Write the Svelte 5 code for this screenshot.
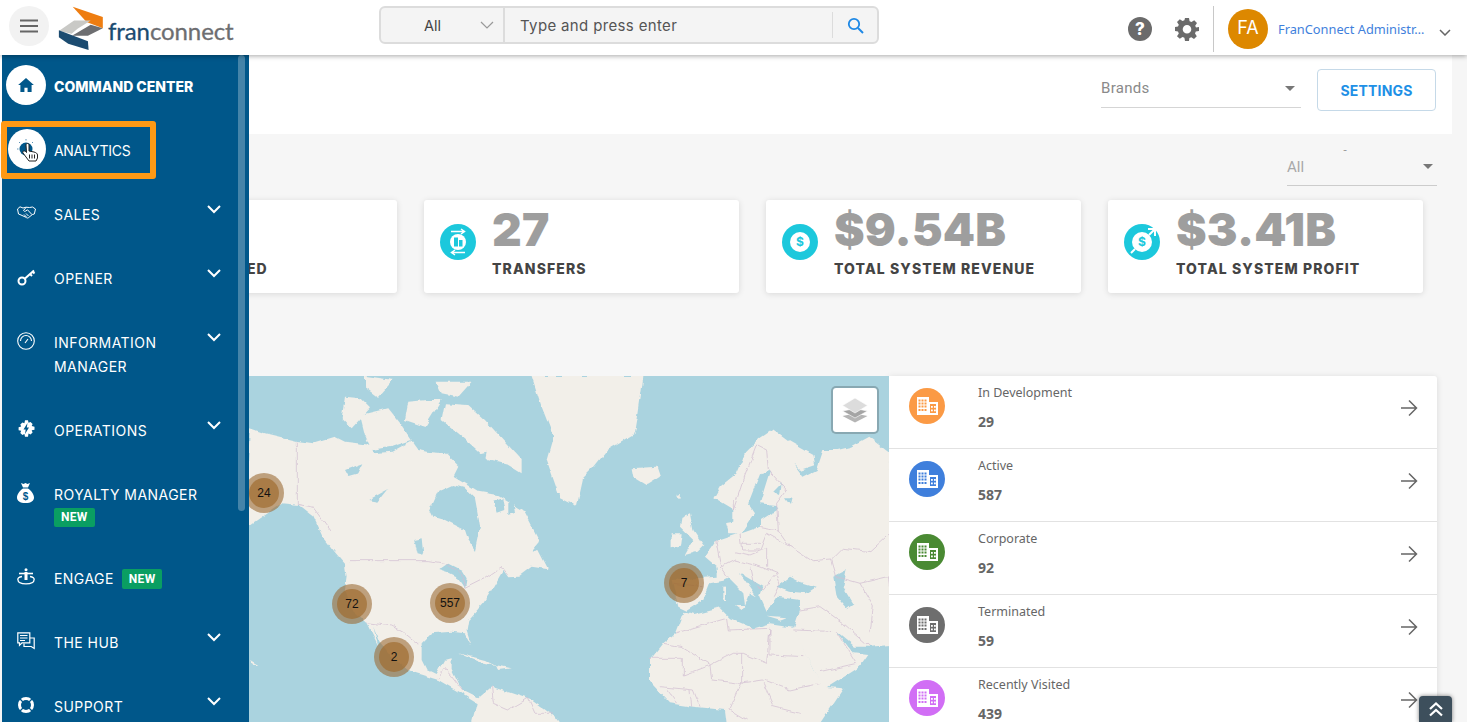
<script>
  const menu = [
    { label: 'SALES', icon: 'sales', more: true },
    { label: 'OPENER', icon: 'key', more: true },
    { label: 'INFORMATION MANAGER', icon: 'gauge', more: true, wrap: true },
    { label: 'OPERATIONS', icon: 'ops', more: true },
    { label: 'ROYALTY MANAGER', icon: 'money', badgeBelow: true },
    { label: 'ENGAGE', icon: 'engage', badge: true },
    { label: 'THE HUB', icon: 'hub', more: true },
    { label: 'SUPPORT', icon: 'support', more: true }
  ];

  const cards = [
    { value: '', label: 'UNITS OPENED', icon: 'none' },
    { value: '27', label: 'TRANSFERS', icon: 'transfer' },
    { value: '$9.54B', label: 'TOTAL SYSTEM REVENUE', icon: 'dollar' },
    { value: '$3.41B', label: 'TOTAL SYSTEM PROFIT', icon: 'profit' }
  ];

  const statuses = [
    { label: 'In Development', count: 29, color: '#fb9a45' },
    { label: 'Active', count: 587, color: '#3f7fdc' },
    { label: 'Corporate', count: 92, color: '#4a8a33' },
    { label: 'Terminated', count: 59, color: '#6e6e6e' },
    { label: 'Recently Visited', count: 439, color: '#d16ef5' }
  ];

  const clusters = [
    { n: 24, x: 264, y: 493 },
    { n: 72, x: 352, y: 604 },
    { n: 557, x: 450, y: 603 },
    { n: 2, x: 394, y: 657 },
    { n: 7, x: 684, y: 583 }
  ];

  // map outlines, traced in crop coordinates (3x) and scaled back by the groups below
  const landWest = [
    '0,455 15,175 60,190 157,213 205,220 270,200 300,215 380,225 385,250 440,245 500,212 520,240 545,245 600,250 640,290 625,320 650,335 700,365 760,375 835,420 885,515 860,545 880,540 910,598 860,590 820,620 790,622 775,600 740,660 715,700 670,750 665,780 680,828 660,790 620,785 560,790 530,820 530,870 545,900 575,915 600,870 620,865 620,900 650,960 700,985 740,950 860,990 930,1040 945,1060 680,1060 695,1000 640,965 580,930 500,905 440,860 400,810 385,770 400,830 365,760 320,720 300,660 305,620 300,585 270,550 235,505 205,440 160,405 110,400 50,440 15,465',
    '300,80 345,85 375,115 320,175 290,145',
    '345,135 430,115 470,165 500,210 440,230 380,240 360,195',
    '360,18 445,30 400,80 360,50',
    '575,35 680,35 640,80 590,70',
    '490,95 545,90 590,90 540,170 480,150',
    '600,100 670,105 720,150 830,270 830,310 790,285 730,270 640,190 590,150',
    '860,18 990,18 990,410 940,370 905,270 925,200 890,110',
    '640,850 720,870 750,885 700,875',
    '750,885 800,895 760,900',
    '15,870 40,885 25,885'
  ];
  const waterWest = [
    '555,420 580,365 625,345 660,355 690,385 700,440 705,470 690,540 670,510 660,480 600,450 565,440',
    '745,395 772,385 778,420 755,428',
    '300,300 355,280 340,310 310,318',
    '370,390 430,358 400,395',
    '505,510 530,505 535,555 515,550',
    '580,600 610,580 650,600 665,625 660,655 640,625 610,610',
    '705,250 725,245 720,270',
    '790,400 805,385 810,430 790,435'
  ];
  const bordersWest = [
    '157,215 157,403 205,412 255,480',
    '313,572 550,572 600,580 650,610 660,655 720,625 770,590 790,615',
    '365,758 440,768 480,790 520,822',
    '580,925 600,895 620,920 650,960',
    '740,950 745,1000 790,1020 850,985 870,1030 920,1030'
  ];
  const landEast = [
    '0,18 250,18 245,60 235,130 225,190 140,240 100,290 70,320 50,410 0,385',
    '215,295 290,290 300,320 260,345 220,320',
    '365,440 390,430 400,480 430,525 410,545 375,555 400,510 360,470',
    '335,490 365,490 360,530 335,535',
    '460,385 480,350 530,310 555,250 600,205 640,178 690,215 760,255 765,285 720,300 700,280 730,320 770,300 790,240 830,240 870,230 925,200 990,250 990,825 930,830 885,830 830,785 880,850 925,855 900,890 790,960 700,780 720,720 720,690 650,680 620,725 600,680 610,650 540,610 590,680 570,670 555,705 550,670 505,625 490,632 450,640 430,690 380,722 355,710 335,630 470,620 470,590 435,560 470,510 530,490 505,490 495,460 520,455 520,420',
    '270,870 310,820 345,790 370,725 400,735 480,715 510,745 580,775 630,760 700,770 760,900 790,950 850,955 800,1030 780,1060 500,1060 495,1020 400,1010 330,1000 270,935',
    '490,650 498,650 498,690 490,690',
    '525,705 555,705 545,720',
    '620,740 680,745 660,752',
    '345,375 360,372 358,385'
  ];
  const waterEast = [
    '565,400 600,310 630,302 612,360 600,400 650,405 655,415 600,450 600,470 545,490 585,430',
    '650,650 690,620 720,635 770,650 740,670 690,665',
    '820,620 860,600 850,650 880,700 860,715 830,680',
    '675,385 695,385 690,405',
    '640,365 665,340 660,375'
  ];
  const bordersEast = [
    '520,390 520,420 550,330 590,225 620,240 625,300 680,360 650,400 655,480',
    '540,490 545,540 600,540 620,490 690,530 760,575 815,570 850,535 930,545 990,490',
    '470,510 485,590 525,570 600,590 650,610 610,660',
    '525,545 570,555 620,535 620,590',
    '545,520 600,520',
    '570,590 580,640 610,660',
    '650,610 660,640 640,680',
    '600,470 655,480 690,530',
    '480,590 505,625',
    '340,640 430,650',
    '345,790 500,745 505,780 630,775 630,855 730,860',
    '310,820 365,830 450,885 520,850 550,850 620,880 630,775',
    '270,865 370,865 370,915 450,885 455,930 540,940 610,930 690,960 780,940',
    '300,950 400,960 420,1010',
    '545,850 545,940 510,1020 560,1050',
    '610,940 640,1010 720,1030',
    '780,905 890,880 830,785 700,780',
    '720,720 780,710 850,760 930,830',
    '815,570 830,620 900,640 985,620 990,660',
    '900,640 940,710 930,790',
    '320,960 350,1000',
    '390,960 395,1010'
  ];

  const dots = [3, 6, 9];
</script>

<div class="page">
  <header class="topbar">
    <button class="menu-btn" aria-label="menu">
      <svg width="18" height="14" viewBox="0 0 18 14"><path d="M0 1.5h18M0 7h18M0 12.5h18" stroke="#666" stroke-width="2" /></svg>
    </button>
    <div class="logo">
      <svg width="46" height="45" viewBox="176 16 132 130">
        <polygon points="218,18 305,48 305,80 258,62" fill="#ee7d11" />
        <polygon points="178,88 222,58 270,58 232,82 215,96" fill="#c9c9c6" />
        <polygon points="216,102 270,70 305,80 262,102" fill="#6d6e71" />
        <polygon points="178,86 262,118 264,143 205,125 178,106" fill="#1b4b70" />
      </svg>
      <span class="logo-text"><span class="fran">fran</span>connect</span>
    </div>

    <div class="search">
      <div class="scope">
        <span>All</span>
        <svg width="14" height="8" viewBox="0 0 14 8"><path d="M1 1l6 6 6-6" fill="none" stroke="#999" stroke-width="1.2" /></svg>
      </div>
      <div class="search-input">Type and press enter</div>
      <div class="search-btn">
        <svg width="17" height="17" viewBox="0 0 17 17"><circle cx="7" cy="7" r="5.2" fill="none" stroke="#1e88e5" stroke-width="1.8" /><path d="M11 11l5 5" stroke="#1e88e5" stroke-width="2" /></svg>
      </div>
    </div>

    <div class="top-right">
      <div class="help">?</div>
      <svg class="gear" width="24" height="24" viewBox="0 0 24 24">
        <path fill="#6b6b6b" fill-rule="evenodd" d="M10 1h4l.6 3.2 1.9.8 2.7-1.8 2.8 2.8-1.8 2.7.8 1.9L24 10v4l-3.2.6-.8 1.9 1.8 2.7-2.8 2.8-2.7-1.8-1.9.8L14 24h-4l-.6-3.2-1.9-.8-2.7 1.8L2 19.2l1.8-2.7-.8-1.9L0 14v-4l3-.4.8-1.9L2 5l2.8-2.8 2.7 1.8 1.9-.8zM12 8a4.300 4.300 0 1 0 0 8.600 4.300 4.300 0 0 0 0-8.600z" />
      </svg>
      <div class="vline"></div>
      <div class="avatar">FA</div>
      <div class="user-name">FranConnect Administr…</div>
      <svg width="12" height="7" viewBox="0 0 12 7"><path d="M1 1l5 5 5-5" fill="none" stroke="#666" stroke-width="1.5" /></svg>
    </div>
  </header>

  <main class="content">
    <section class="band">
      <div class="select brands"><span>Brands</span><i class="caret"></i></div>
      <button class="settings">SETTINGS</button>
    </section>

    <section class="filter">
      <span class="tick">-</span>
      <div class="select all"><span>All</span><i class="caret"></i></div>
    </section>

    <section class="cards">
      {#each cards as card}
        <div class="card">
          <div class="card-icon">
            {#if card.icon === 'transfer'}
              <svg width="30" height="30" viewBox="0 0 30 30">
                <circle cx="15" cy="15" r="8" fill="#fff" />
                <rect x="11" y="10.500" width="4" height="9" fill="#1cc8dc" /><rect x="16" y="13" width="3.500" height="6.500" fill="#1cc8dc" />
                <path d="M8 4.500h13M18 2l3.500 2.500L18 7M22 25.500H9M12 23l-3.500 2.500L12 28" fill="none" stroke="#fff" stroke-width="1.500" />
              </svg>
            {:else if card.icon === 'dollar'}
              <span class="coin">$</span>
            {:else if card.icon === 'profit'}
              <span class="coin">$</span>
              <svg class="profit-arrow" width="36" height="36" viewBox="0 0 36 36">
                <path d="M7 29l4-4M25 11l5-5M24 5h7v7" fill="none" stroke="#fff" stroke-width="2" />
              </svg>
            {/if}
          </div>
          <div class="card-text">
            <div class="card-value">{card.value}</div>
            <div class="card-label">{card.label}</div>
          </div>
        </div>
      {/each}
    </section>

    <section class="map-row">
      <div class="map">
        <svg width="807" height="346" viewBox="82 376 807 346">
          <defs>
            <filter id="coast" x="0" y="0" width="100%" height="100%">
              <feTurbulence type="fractalNoise" baseFrequency="0.09" numOctaves="3" seed="4" />
              <feDisplacementMap in="SourceGraphic" scale="5" xChannelSelector="R" yChannelSelector="G" />
            </filter>
          </defs>
          <rect x="82" y="376" width="807" height="346" fill="#aad3df" />
          <g filter="url(#coast)">
            <g transform="translate(245 370) scale(0.3333)">
              {#each landWest as p}<polygon points={p} fill="#f2efe9" />{/each}
              {#each waterWest as p}<polygon points={p} fill="#aad3df" />{/each}
              {#each bordersWest as p}<polyline points={p} fill="none" stroke="#d2bfd2" stroke-width="2.200" />{/each}
            </g>
            <g transform="translate(560 370) scale(0.3333)">
              {#each landEast as p}<polygon points={p} fill="#f2efe9" />{/each}
              {#each waterEast as p}<polygon points={p} fill="#aad3df" />{/each}
              {#each bordersEast as p}<polyline points={p} fill="none" stroke="#d2bfd2" stroke-width="2.200" />{/each}
            </g>
          </g>
          {#each clusters as c}
            <circle cx={c.x} cy={c.y} r="20" fill="#9b6a35" opacity="0.6" />
            <circle cx={c.x} cy={c.y} r="15" fill="#a06c30" opacity="0.7" />
            <text x={c.x} y={c.y + 4} text-anchor="middle" class="cluster-text">{c.n}</text>
          {/each}
        </svg>
        <div class="layers">
          <svg width="28" height="26" viewBox="0 0 28 26">
            <path d="M14 16.500l12.500 2.500L14 25.500 1.500 19z" fill="#b5b5b5" />
            <path d="M14 11.500l12.500 2.500L14 21 1.500 14z" fill="#a5a5a5" stroke="#fff" stroke-width=".6" />
            <path d="M14 1L26.500 8.500 14 16 1.500 8.500z" fill="#dcdcdc" stroke="#fff" stroke-width=".6" />
          </svg>
        </div>
      </div>

      <div class="status-list">
        {#each statuses as s}
          <div class="status">
            <div class="status-icon" style="background:{s.color};color:{s.color}">
              <svg width="21" height="18" viewBox="0 0 21 18">
                <rect x="0" y="0" width="12" height="18" fill="#fff" />
                <path d="M12 5h9v13h-9" fill="#fff" />
                <rect x="13" y="7" width="6" height="9" fill="currentColor" />
                {#each dots as y}
                  {#each dots as x}
                    <rect x={x - 1.500} y={y - .5} width="2" height="2" fill="currentColor" />
                  {/each}
                {/each}
                <rect x="1.500" y="12" width="2" height="2" fill="currentColor" />
                <rect x="4.500" y="12" width="2" height="2" fill="currentColor" />
                <rect x="7.500" y="12" width="2" height="2" fill="currentColor" />
                <rect x="14" y="9" width="1.800" height="1.800" fill="#fff" /><rect x="14" y="12.500" width="1.800" height="1.800" fill="#fff" />
                <rect x="17" y="9" width="1.800" height="1.800" fill="#fff" /><rect x="17" y="12.500" width="1.800" height="1.800" fill="#fff" />
              </svg>
            </div>
            <div class="status-text">
              <div class="status-label">{s.label}</div>
              <div class="status-count">{s.count}</div>
            </div>
            <svg class="arrow" width="18" height="18" viewBox="0 0 18 18"><path d="M1 9h15.500M9 1.500L16.500 9 9 16.500" fill="none" stroke="#666" stroke-width="1.500" /></svg>
          </div>
        {/each}
      </div>
    </section>
  </main>

  <aside class="sidebar">
    <div class="scrollbar"></div>
    <div class="item strong">
      <div class="round">
        <svg width="16" height="14" viewBox="0 0 18 16"><path d="M9 0L0 8h2.600v8h4.600v-5h3.600v5h4.600V8H18z" fill="#00578a" /></svg>
      </div>
      <span class="item-label">COMMAND CENTER</span>
    </div>
    <div class="item analytics">
      <div class="round small">
        <svg width="26" height="26" viewBox="0 0 26 26">
          <circle cx="12" cy="13" r="6.500" fill="#00578a" />
          <path d="M12 3v1.500M5 6l1 1M3 13h1.500M19 6l-1 1" stroke="#5e93b5" stroke-width="1" />
          <path d="M12 9c0-2 3-2 3 0v6l5 1c2 .5 3.500 1.500 3.500 3v3l-1.500 3h-7l-6-8c-1-1.500 1-3 2.500-1.500l1 1z" fill="#fff" stroke="#222" stroke-width="1" />
          <path d="M15.500 18.500v4M18 18.500v4M20.500 18.500v4" stroke="#222" stroke-width="1" />
        </svg>
      </div>
      <span class="item-label">ANALYTICS</span>
      <div class="highlight"></div>
    </div>

    {#each menu as m}
      <div class="item plain" class:tall={m.wrap} class:royalty={m.badgeBelow}>
        <div class="item-icon">
          {#if m.icon === 'sales'}
            <svg width="19" height="13" viewBox="0 0 19 13" fill="none" stroke="#fff" stroke-width="1"><path d="M.5 3L3 .8l3 1.200 3-.8 3.500.3L15.500 1l3 2-1.200 5-2 .6-4 3.200c-.8.500-1.800 0-2.300-.5L4 9 1.500 8z" /><path d="M9 1.500L6.500 4.500c.5 1 1.800 1 2.500.3l1.500-1 4.500 4.800M7 8.500l2.500 2.500M9 7.500l2.500 2.500" /></svg>
          {:else if m.icon === 'key'}
            <svg width="19" height="19" viewBox="0 0 19 19" fill="none" stroke="#fff" stroke-width="2"><circle cx="5" cy="14" r="3.500" /><path d="M8 11.500L17 3.500M13 7l2 2M15.500 4.500l2 2" /></svg>
          {:else if m.icon === 'gauge'}
            <svg width="18" height="18" viewBox="0 0 18 18" fill="none" stroke="#fff" stroke-width="1.100"><circle cx="9" cy="9" r="8.300" /><path d="M3.500 9a5.500 5.500 0 0 1 11 0M8 11l3-4" /></svg>
          {:else if m.icon === 'ops'}
            <svg width="19" height="19" viewBox="0 0 19 19"><path fill="#fff" d="M8 0h3l.5 2.500 2-.8 2.100 2.100-.9 2 2.800.7v3l-2.800.6.900 2.100-2.100 2.100-2-.9L11 16.500H8l-.6-2.600-2 .9-2.100-2.100.9-2.100L1.600 10V7l2.600-.7-.9-2 2.100-2.100 2 .8z" transform="translate(0 1.200)" /><path fill="#00578a" d="M10.500 4L6.500 10.500h2.200L8 15l4-6.500H9.800z" /></svg>
          {:else if m.icon === 'money'}
            <svg width="17" height="20" viewBox="0 0 17 20"><path fill="#fff" d="M4 0l2.500 1L8.500 0l2 1 2.500-1-2 4.500H6zM6 5.500h5C14 7.500 17 11 17 14.500 17 18 14 20 8.500 20S0 18 0 14.500C0 11 3 7.500 6 5.500z" /><text x="8.500" y="16.500" text-anchor="middle" class="money-sign">$</text></svg>
          {:else if m.icon === 'engage'}
            <svg width="18" height="17" viewBox="0 0 18 17" fill="none" stroke="#fff" stroke-width="1.300"><circle cx="9" cy="1.800" r="1.500" fill="#fff" stroke="none" /><path d="M2 5.500h14" stroke-width="1.600" /><path d="M9 4v8" stroke-width="3" /><path d="M5 8.500a6 3 0 0 0-4 3.500c0 2.500 3.500 3.800 8 3.800s8-1.300 8-3.800a6 3 0 0 0-4-3.500" /></svg>
          {:else if m.icon === 'hub'}
            <svg width="18" height="18" viewBox="0 0 18 18" fill="none" stroke="#fff" stroke-width="1.200"><path d="M.8.800h12v10H5l-2.500 2.500V10.800H.8zM3 3.500h7.500M3 6h7.500M3 8.500h5" /><path d="M13 6h4.200v10.500l-3-2H7v-3" /></svg>
          {:else if m.icon === 'support'}
            <svg width="18" height="18" viewBox="0 0 18 18" fill="none" stroke="#fff"><circle cx="9" cy="9" r="6.500" stroke-width="3" /><path d="M3 3l3 3M15 3l-3 3M3 15l3-3M15 15l-3-3" stroke="#00578a" stroke-width="1.300" /></svg>
          {/if}
        </div>
        <div class="item-body">
          <span class="item-label" class:wrap={m.wrap}>{m.label}</span>
          {#if m.badge}<span class="badge">NEW</span>{/if}
          {#if m.badgeBelow}<span class="badge below">NEW</span>{/if}
        </div>
        {#if m.more}
          <svg class="chev" width="14" height="9" viewBox="0 0 14 9"><path d="M1 1l6 6 6-6" fill="none" stroke="#fff" stroke-width="2" /></svg>
        {/if}
      </div>
    {/each}
  </aside>

  <div class="to-top">
    <svg width="14" height="15" viewBox="0 0 14 15"><path d="M1 7l6-5.500L13 7M1 13.500L7 8l6 5.500" fill="none" stroke="#fff" stroke-width="2.200" /></svg>
  </div>
</div>

<style>
  :global(body) {
    margin: 0;
    background: #f6f6f6;
    font-family: Inter, sans-serif;
  }
  .page {
    position: relative;
    width: 1467px;
    height: 722px;
    overflow: hidden;
  }

  /* top bar */
  .topbar {
    position: relative;
    z-index: 3;
    height: 55px;
    background: #fff;
    box-shadow: 0 1px 5px rgba(0, 0, 0, 0.35);
    display: flex;
    align-items: flex-start;
    box-sizing: border-box;
    padding: 6px 0 0 9px;
  }
  .menu-btn {
    width: 40px;
    height: 40px;
    border: 0;
    padding: 0;
    border-radius: 50%;
    background: #f2f2f2;
    display: flex;
    align-items: center;
    justify-content: center;
  }
  .logo {
    display: flex;
    align-items: center;
    margin-left: 9px;
    width: 321px;
    height: 45px;
  }
  .logo-text {
    font-family: Lato, sans-serif;
    font-size: 24px;
    color: #6d6e71;
    margin: 4px 0 0 4px;
    letter-spacing: -0.1px;
    -webkit-text-stroke: 0.3px currentColor;
  }
  .fran { color: #1b4b70; }
  .search {
    width: 500px;
    height: 38px;
    box-sizing: border-box;
    border: 2px solid #dcdcdc;
    border-radius: 6px;
    background: #f4f4f4;
    display: flex;
    align-items: center;
    font-size: 15px;
    color: #555;
  }
  .scope {
    width: 124px;
    height: 100%;
    box-sizing: border-box;
    border-right: 2px solid #dcdcdc;
    display: flex;
    align-items: center;
    justify-content: flex-end;
    padding-right: 9px;
    gap: 39px;
    color: #444;
    font-size: 14.500px;
  }
  .search-input {
    flex: 1;
    padding-left: 15px;
    letter-spacing: 0.35px;
  }
  .search-btn {
    width: 45px;
    height: 26px;
    box-sizing: border-box;
    border-left: 1px solid #dcdcdc;
    display: flex;
    align-items: center;
    justify-content: center;
  }
  .top-right {
    margin-left: 249px;
    display: flex;
    align-items: center;
    height: 44px;
  }
  .help {
    width: 24px;
    height: 24px;
    border-radius: 50%;
    background: #6b6b6b;
    color: #fff;
    font-weight: 800;
    font-size: 17px;
    line-height: 24px;
    text-align: center;
    margin-top: 1px;
  }
  .gear { margin-left: 23px; margin-top: 1px; }
  .vline {
    width: 1px;
    height: 46px;
    background: #c8c8c8;
    margin-left: 14px;
    margin-top: 1px;
  }
  .avatar {
    width: 40px;
    height: 40px;
    border-radius: 50%;
    background: #dd8800;
    color: #fff;
    font-size: 18px;
    line-height: 38px;
    text-align: center;
    margin-left: 14px;
    margin-top: 1px;
  }
  .user-name {
    font-family: "Noto Sans", sans-serif;
    font-size: 12.800px;
    color: #3f7fdc;
    margin-left: 10px;
    width: 161px;
    white-space: nowrap;
    margin-top: 1px;
  }
  .top-right > svg:last-child { margin-top: 8px; }

  /* page content, the drawer lies over its left part */
  .content { width: 1452px; }
  .band {
    height: 79px;
    background: #fff;
    display: flex;
    align-items: center;
    justify-content: flex-end;
    padding: 0 16px 9px 0;
    gap: 16px;
    box-sizing: border-box;
  }
  .select {
    display: flex;
    align-items: center;
    justify-content: space-between;
    box-sizing: border-box;
    border-bottom: 1px solid #d5d5d5;
    font-family: Roboto, sans-serif;
    font-size: 15px;
    color: #8a8a8a;
  }
  .brands {
    width: 200px;
    height: 38px;
    margin-bottom: 3px;
    padding-right: 6px;
    letter-spacing: 0.3px;
  }
  .caret {
    width: 0;
    height: 0;
    border-left: 5px solid transparent;
    border-right: 5px solid transparent;
    border-top: 5px solid #777;
  }
  .settings {
    width: 119px;
    height: 42px;
    background: #fff;
    border: 1px solid #c5d9e8;
    border-radius: 4px;
    color: #1e90e6;
    font-family: Inter, sans-serif;
    font-weight: 700;
    font-size: 14px;
    letter-spacing: 0.2px;
  }
  .filter {
    position: relative;
    height: 52px;
    display: flex;
    justify-content: flex-end;
    align-items: flex-end;
    padding-right: 15px;
  }
  .tick {
    position: absolute;
    left: 1343px;
    top: 10px;
    font-size: 9px;
    color: #888;
  }
  .all {
    width: 150px;
    height: 38px;
    padding-right: 4px;
    color: #a8a8a8;
    border-bottom-color: #ccc;
  }
  .cards {
    display: flex;
    gap: 27px;
    margin-top: 14px;
    padding-left: 82px;
  }
  .card {
    width: 315px;
    height: 93px;
    box-sizing: border-box;
    background: #fff;
    border-radius: 3px;
    box-shadow: 0 1px 6px rgba(0, 0, 0, 0.12);
    display: flex;
    padding-left: 16px;
    gap: 16px;
  }
  .card-icon {
    position: relative;
    width: 36px;
    height: 36px;
    margin-top: 24px;
    border-radius: 50%;
    background: #1cc8dc;
    display: flex;
    align-items: center;
    justify-content: center;
    flex: none;
  }
  .card:first-child .card-icon { background: transparent; }
  .coin {
    width: 20px;
    height: 20px;
    border-radius: 50%;
    background: #fff;
    color: #1cc8dc;
    font-size: 12px;
    font-weight: 700;
    line-height: 20px;
    text-align: center;
  }
  .profit-arrow { position: absolute; left: 0; top: 0; }
  .card-value {
    height: 60px;
    font-weight: 900;
    font-size: 46px;
    line-height: 59px;
    color: #9e9e9e;
    letter-spacing: 0.2px;
    white-space: nowrap;
  }
  .card-label {
    font-weight: 800;
    font-size: 14px;
    line-height: 18px;
    color: #444;
    letter-spacing: 1.1px;
    white-space: nowrap;
  }
  .map-row {
    display: flex;
    margin: 83px 15px 0 82px;
  }
  .map {
    position: relative;
    width: 807px;
    height: 346px;
    flex: none;
    overflow: hidden;
  }
  .map > svg { display: block; }
  .cluster-text {
    font-family: "Liberation Sans", sans-serif;
    font-size: 12px;
    fill: #111;
  }
  .layers {
    position: absolute;
    left: 749px;
    top: 10px;
    width: 44px;
    height: 44px;
    background: #fff;
    border: 2px solid rgba(0, 0, 0, 0.2);
    background-clip: padding-box;
    border-radius: 5px;
    display: flex;
    align-items: center;
    justify-content: center;
  }
  .status-list {
    flex: 1;
    background: #fff;
    border-radius: 0 3px 0 0;
    box-shadow: 0 1px 6px rgba(0, 0, 0, 0.12);
    height: 346px;
    overflow: hidden;
  }
  .status {
    height: 73px;
    box-sizing: border-box;
    border-bottom: 1px solid #e2e2e2;
    display: flex;
    padding: 12px 19px 0 20px;
  }
  .status-icon {
    width: 36px;
    height: 36px;
    border-radius: 50%;
    display: flex;
    align-items: center;
    justify-content: center;
    flex: none;
  }
  .status-text {
    flex: 1;
    margin-left: 33px;
    margin-top: -4px;
    font-family: "Noto Sans", sans-serif;
    color: #666;
  }
  .status-label {
    font-size: 12.500px;
    line-height: 17px;
  }
  .status-count {
    margin-top: 11px;
    font-size: 14px;
    font-weight: 700;
    line-height: 19px;
  }
  .arrow { margin-top: 11px; }
  .to-top {
    position: absolute;
    z-index: 4;
    left: 1419px;
    top: 696px;
    width: 33px;
    height: 26px;
    background: #3d4f5c;
    border-radius: 4px 4px 0 0;
    box-shadow: 0 0 4px rgba(0, 0, 0, 0.5);
    display: flex;
    align-items: center;
    justify-content: center;
  }

  /* drawer */
  .sidebar {
    position: absolute;
    z-index: 2;
    left: 2px;
    top: 55px;
    bottom: 0;
    width: 247px;
    background: #00578a;
    color: #fff;
    font-size: 14px;
  }
  .scrollbar {
    position: absolute;
    left: 236px;
    top: 0;
    width: 7px;
    height: 456px;
    border-radius: 4px;
    background: rgba(255, 255, 255, 0.27);
  }
  .item {
    position: relative;
    height: 64px;
    display: flex;
    align-items: center;
    padding-left: 4px;
    gap: 8px;
  }
  .item-label {
    letter-spacing: 0.45px;
    font-weight: 400;
    line-height: 24px;
  }
  .strong .item-label {
    font-weight: 800;
    letter-spacing: 0;
  }
  .analytics .item-label { letter-spacing: -0.3px; }
  .round {
    width: 40px;
    height: 40px;
    border-radius: 50%;
    background: #fff;
    display: flex;
    align-items: center;
    justify-content: center;
    flex: none;
    margin-bottom: 4px;
  }
  .round.small {
    width: 38px;
    margin-left: 2px;
  }
  .highlight {
    position: absolute;
    left: -1px;
    top: 2px;
    width: 143px;
    height: 46px;
    border: 6px solid #ff9914;
    border-radius: 3px;
  }
  .plain {
    align-items: flex-start;
    padding: 20px 0 0 15px;
    box-sizing: border-box;
    gap: 0;
  }
  .tall { height: 88px; }
  .royalty { height: 84px; }
  .item-icon {
    width: 37px;
    height: 19px;
    flex: none;
    display: flex;
    align-items: center;
  }
  .item-body {
    display: flex;
    flex-wrap: wrap;
    align-items: center;
    width: 150px;
    gap: 0 8px;
  }
  .item-label.wrap { width: 130px; }
  .badge {
    background: #0a9e62;
    border-radius: 2px;
    font-family: Roboto, sans-serif;
    font-weight: 700;
    font-size: 12px;
    line-height: 20px;
    height: 20px;
    padding: 0 7px;
    letter-spacing: 0.3px;
  }
  .badge.below {
    height: 19px;
    line-height: 19px;
    margin-top: 1px;
  }
  .chev {
    margin-left: 3px;
    margin-top: 2px;
  }
  .money-sign {
    font-family: "Liberation Sans", sans-serif;
    font-weight: 700;
    font-size: 10px;
    fill: #00578a;
  }
</style>
